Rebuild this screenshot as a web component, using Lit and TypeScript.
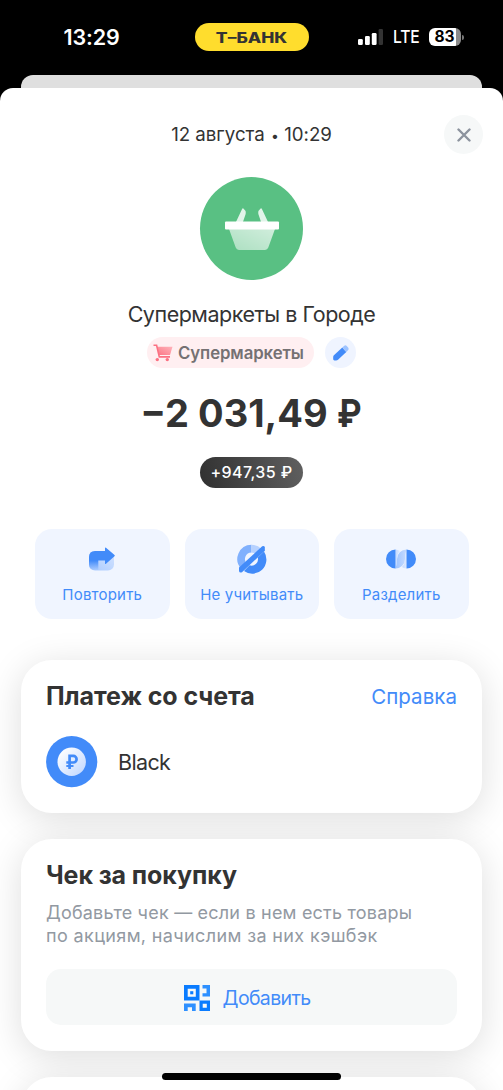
import { LitElement, html, css } from "lit";
import { customElement } from "lit/decorators.js";

const basket = html`<svg width="56" height="44" viewBox="0 0 56 44">
  <defs><linearGradient id="b" x1="0" y1="1" x2="1" y2="0">
    <stop offset="0" stop-color="#fff" stop-opacity=".5"/><stop offset="1" stop-color="#fff" stop-opacity=".72"/>
  </linearGradient></defs>
  <path d="M11.500 16 18.200 1.800Q18.700 1 19.400 1.600Q22.600 4.200 21.500 7.500L18.600 16ZM44.500 16 37.800 1.800Q37.300 1 36.600 1.600Q33.400 4.200 34.500 7.500L37.400 16Z" fill="#fff" fill-opacity=".82"/>
  <path d="M5 22H51L44.300 40.600Q43.500 43 41 43H15Q12.500 43 11.700 40.600Z" fill="url(#b)"/>
  <rect x="1" y="14.500" width="54" height="8" rx="1" fill="#fff"/>
</svg>`;

const cart = html`<svg width="20" height="18" viewBox="0 0 20 18">
  <defs><linearGradient id="c" x1="1" y1="0" x2="0" y2="1">
    <stop offset="0" stop-color="#ffb3ba"/><stop offset="1" stop-color="#fb7585"/>
  </linearGradient></defs>
  <path d="M4.200 2.800H19.500L17 11H5.800Z" fill="url(#c)"/>
  <path d="M.5 1.300H3.600L6.300 12.900H17" fill="none" stroke="#fb7082" stroke-width="1.600"/>
  <circle cx="4.300" cy="15.600" r="1.700" fill="#fb7082"/><circle cx="14.300" cy="15.600" r="1.700" fill="#fb7082"/>
</svg>`;

const pencil = html`<svg width="18" height="18" viewBox="0 0 18 18">
  <path d="M1.900 11.200 10.300 3.600 14.300 7.900 6 15.700Q5.200 16.400 4 16.400H2.400Q1.300 16.400 1.200 15.300V13Q1.200 11.900 1.900 11.200Z" fill="#428bf9"/>
  <path d="M10.300 3.600 12.300 1.700Q13.400.8 14.500 1.800L16.300 3.700Q17.200 4.900 16.200 6.100L14.300 7.900Z" fill="#9dc3ff"/>
</svg>`;

const repeat = html`<svg width="28" height="26" viewBox="0 -1 28 26">
  <defs>
    <linearGradient id="r1" x1="0" y1="1" x2="1" y2="0"><stop offset="0" stop-color="#a9caff"/><stop offset="1" stop-color="#d5e4ff"/></linearGradient>
    <linearGradient id="r2" x1="0" y1="0" x2="0" y2="1"><stop offset=".5" stop-color="#428bf9"/><stop offset="1" stop-color="#428bf9" stop-opacity="0"/></linearGradient>
  </defs>
  <rect x="1" y="4" width="25" height="19.500" rx="6" fill="url(#r1)"/>
  <path d="M1 10Q1 4 7 4H10.300V23.500H7Q1 23.500 1 17.500Z" fill="url(#r2)"/>
  <path d="M10 4H17V1.200Q17.100.1 18 .8L26.500 8Q27.200 8.600 26.500 9.200L18 16.800Q17 17.400 17 16.400V13.500H10Z" fill="#428bf9"/>
</svg>`;

const exclude = html`<svg width="31" height="30" viewBox="0 0 31 30">
  <path d="M15.500.8A14.200 14.200 0 0 0 5.500 25L10.900 19.600A6.500 6.500 0 0 1 15.500 8.500Z" fill="#80b0fd"/>
  <path d="M15.500.8A14.200 14.200 0 0 1 25.500 5L20 10.400A6.500 6.500 0 0 0 15.500 8.500Z" fill="#b6d1ff"/>
  <path d="M28 7.600A14.200 14.200 0 0 1 8 27.100L13.600 21.300A6.500 6.500 0 0 0 21.800 13.400Z" fill="#428bf9"/>
  <path d="M26.200 2.300Q28.300 1.200 28.800 3.300L28.900 6.800 6 28.200Q3.500 29.300 3 26.900L3 23.500Z" fill="#428bf9"/>
</svg>`;

const split = html`<svg width="32" height="20" viewBox="0 0 32 20">
  <defs>
    <linearGradient id="s1"><stop offset="0" stop-color="#c3d9ff"/><stop offset="1" stop-color="#dfeaff"/></linearGradient>
    <linearGradient id="s2"><stop offset="0" stop-color="#9fc4ff"/><stop offset="1" stop-color="#c6dbff"/></linearGradient>
  </defs>
  <path d="M10.500.5Q13 .6 15 2Q12 5 12 10Q12 15 10.500 19.500Z" fill="url(#s1)"/>
  <path d="M21.500.5V19.500Q18.500 19.400 17 18Q20 15 20 10Z" fill="url(#s1)"/>
  <path d="M10.500 19.500A9.500 9.500 0 0 0 20 10Q20 5 21.500.5A9.500 9.500 0 0 0 12 10Q12 15 10.500 19.500Z" fill="url(#s2)"/>
  <path d="M10.500.5A9.500 9.500 0 0 0 10.500 19.500ZM21.500.5A9.500 9.500 0 0 1 21.500 19.500Z" fill="#428bf9"/>
</svg>`;

const qr = html`<svg width="26" height="26" viewBox="0 0 26 26" fill="#0a7cff">
  <path fill-rule="evenodd" d="M0 0H15.500V15.500H0ZM3.700 3.700V11.800H11.800V3.700ZM15.500 15.500H26V26H15.500ZM18.700 18.700V22.800H22.800V18.700Z"/>
  <rect x="6.200" y="6.200" width="3.100" height="3.100"/>
  <path d="M18.500 0H26V11.500H18.500V8.200H22.500V3.500H18.500Z" fill="#2e90ff"/>
  <path d="M0 18.500H11.700V26H8V22.300H3.700V26H0Z" fill="#2e90ff"/>
</svg>`;

const coin = html`<svg width="52" height="52" viewBox="0 0 52 52">
  <defs><linearGradient id="k" x1="0" y1="0" x2="1" y2="1"><stop offset=".1" stop-color="#fff"/><stop offset="1" stop-color="#bdd5ff"/></linearGradient></defs>
  <circle cx="25.700" cy="25.700" r="25.600" fill="#428bf9"/>
  <circle cx="25.700" cy="25.700" r="14.200" fill="url(#k)"/>
  <path d="M23.600 33V19.900H27.300A3.300 3.300 0 0 1 27.300 26.500H20.300" fill="none" stroke="#428bf9" stroke-width="2.700"/>
  <path d="M20.300 30H27.500" stroke="#428bf9" stroke-width="1.900"/>
</svg>`;

const cross = html`<svg width="14" height="14" viewBox="0 0 14 14">
  <path d="M1.500 1.500 12.500 12.500M12.500 1.500 1.500 12.500" stroke="#8c939e" stroke-width="2.400" stroke-linecap="round"/>
</svg>`;

const signal = html`<svg width="26" height="17" viewBox="0 0 26 17" fill="#fff">
  <rect x="0" y="10" width="4.800" height="6" rx="1.300"/><rect x="7" y="7" width="4.800" height="9" rx="1.300"/>
  <rect x="13.800" y="4" width="4.800" height="12" rx="1.300"/><rect x="20.600" y="0" width="4.400" height="16" rx="1.300" fill="#333"/>
</svg>`;

@customElement("app-root")
export class AppRoot extends LitElement {
  static styles = css`
    :host { display: block; height: 1090px; overflow: hidden; background: #000; position: relative;
      font-family: Inter, "Noto Sans", sans-serif; color: #333; }
    * { box-sizing: border-box; }
    svg { display: block; flex: none; }
    div, span { white-space: nowrap; }
    .status { height: 75px; display: grid; grid-template-columns: 1fr 114px 1fr; align-items: start; color: #fff; }
    .time { font-size: 21.500px; font-weight: 600; line-height: 28px; margin: 23px 0 0 63.500px; letter-spacing: -0.100px; }
    .logo { margin-top: 23px; height: 28px; border-radius: 14px; background: #ffdd2d; color: #333;
      display: flex; align-items: center; justify-content: center; }
    .brand { font-size: 14px; font-weight: 800; transform: scaleX(1.250); }
    .right { display: flex; align-items: center; margin: 27px 0 0 49px; height: 20px; }
    .lte { font-size: 17.800px; font-weight: 500; letter-spacing: -0.200px; margin-left: 9px; width: 36px; line-height: 20px;
      transform: scaleX(.880); transform-origin: left; }
    .battery { width: 32px; height: 18px; border-radius: 6px; background: linear-gradient(90deg, #fff 27px, #8b8b8b 27px);
      color: #000; font-size: 15.500px; font-weight: 700; line-height: 18px; padding-left: 6px; letter-spacing: -0.200px; }
    .tip { width: 2px; height: 5px; border-radius: 0 2px 2px 0; background: #777; margin-left: 1px; }
    .behind { height: 13px; margin: 0 21px; background: #dfdfdf; border-radius: 12px 12px 0 0; }
    .sheet { background: #fff; height: 1002px; border-radius: 13px 13px 0 0; padding: 27px 21px 0; overflow: hidden; }
    .head { height: 39px; display: grid; grid-template-columns: 39px 1fr 39px; align-items: center; margin-right: -1px; }
    .date { text-align: center; font-size: 18.700px; letter-spacing: -0.020px; padding-right: 1px; }
    .dot { font-size: 14px; display: inline-block; width: 7px; text-align: center; margin: 0 1px; }
    .close { width: 39px; height: 39px; border-radius: 50%; background: #f6f8f8; display: grid; place-items: center; }
    .summary { display: flex; flex-direction: column; align-items: center; }
    .category { width: 103px; height: 103px; border-radius: 50%; background: #59c083; display: grid; place-items: center; margin-top: 23px; }
    .shop { font-size: 21.500px; line-height: 28px; margin-top: 20px; letter-spacing: -0.480px; }
    .tags { display: flex; gap: 11px; margin-top: 9px; }
    .tag { height: 31px; width: 167px; border-radius: 16px; background: #ffeff1; display: flex; align-items: center; gap: 5px;
      padding-left: 6px; font-size: 16.800px; font-weight: 600; color: #757173; letter-spacing: -0.100px; }
    .edit { width: 31px; height: 31px; border-radius: 50%; background: #eff4ff; display: grid; place-items: center; }
    .amount { font-size: 38px; font-weight: 700; line-height: 46px; margin-top: 22px; }
    .ruble { display: inline-block; transform: scaleX(.870); transform-origin: left; margin-right: -2px; }
    .bonus { height: 31px; width: 103px; border-radius: 16px; background: linear-gradient(75deg, #303030, #606060); color: #fff;
      font-size: 16px; font-weight: 500; line-height: 31px; text-align: center; margin-top: 21px; letter-spacing: .420px; }
    .actions { display: grid; grid-template-columns: repeat(3, 1fr); gap: 15px; margin: 41px 13.500px 0 14px; }
    .action { height: 89.500px; border-radius: 17px; background: #f0f5ff; color: #428bf9; display: flex; flex-direction: column;
      align-items: center; font-size: 15px; }
    .glyph { height: 32px; display: grid; place-items: center; margin-top: 14px; }
    .label { line-height: 20px; margin-top: 10px; letter-spacing: .200px; }
    .cards { display: flex; flex-direction: column; gap: 26px; margin-top: 41.500px; }
    .card { background: #fff; border-radius: 31px; padding: 22px 25px 0 25px; box-shadow: 0 6px 36px rgba(0, 0, 0, .135); }
    .account { height: 153px; }
    .receipt { height: 212px; }
    .next { height: 100px; }
    .row { display: flex; justify-content: space-between; align-items: center; height: 28px; }
    .title { font-size: 25px; font-weight: 700; line-height: 28px; letter-spacing: -0.090px; }
    .link { font-size: 20.500px; color: #428bf9; letter-spacing: .050px; }
    .source { display: flex; align-items: center; gap: 20px; margin-top: 26px; font-size: 21.500px; letter-spacing: -0.650px; }
    .hint { font-size: 18px; line-height: 23px; color: #9299a2; margin-top: 12px; letter-spacing: .200px; }
    .second { letter-spacing: .370px; }
    .add { height: 56px; border-radius: 15px; background: #f6f8f8; color: #428bf9; display: flex; align-items: center;
      justify-content: center; gap: 13px; font-size: 19.500px; letter-spacing: -0.640px; margin-top: 22px; padding: 1px 9px 0 0; }
    .home { position: absolute; left: 162px; top: 1073px; width: 179px; height: 7px; border-radius: 4px; background: #000; }
  `;

  private action(icon: unknown, label: string) {
    return html`<div class="action"><div class="glyph">${icon}</div><span class="label">${label}</span></div>`;
  }

  render() {
    return html`
      <div class="status">
        <span class="time">13:29</span>
        <div class="logo"><span class="brand">Т–БАНК</span></div>
        <div class="right">${signal}<span class="lte">LTE</span><span class="battery">83</span><i class="tip"></i></div>
      </div>
      <div class="behind"></div>
      <div class="sheet">
        <div class="head"><i></i><span class="date">12 августа <span class="dot">•</span> 10:29</span><span class="close">${cross}</span></div>
        <div class="summary">
          <div class="category">${basket}</div>
          <div class="shop">Супермаркеты в Городе</div>
          <div class="tags"><div class="tag">${cart}<span>Супермаркеты</span></div><div class="edit">${pencil}</div></div>
          <div class="amount">−2 031,49 <span class="ruble">₽</span></div>
          <div class="bonus">+947,35 ₽</div>
        </div>
        <div class="actions">
          ${this.action(repeat, "Повторить")}
          ${this.action(exclude, "Не учитывать")}
          ${this.action(split, "Разделить")}
        </div>
        <div class="cards">
          <div class="card account">
            <div class="row"><span class="title">Платеж со счета</span><span class="link">Справка</span></div>
            <div class="source">${coin}<span>Black</span></div>
          </div>
          <div class="card receipt">
            <div class="title">Чек за покупку</div>
            <div class="hint">Добавьте чек — если в нем есть товары<br><span class="second">по акциям, начислим за них кэшбэк</span></div>
            <div class="add">${qr}<span>Добавить</span></div>
          </div>
          <div class="card next"></div>
        </div>
      </div>
      <div class="home"></div>
    `;
  }
}
